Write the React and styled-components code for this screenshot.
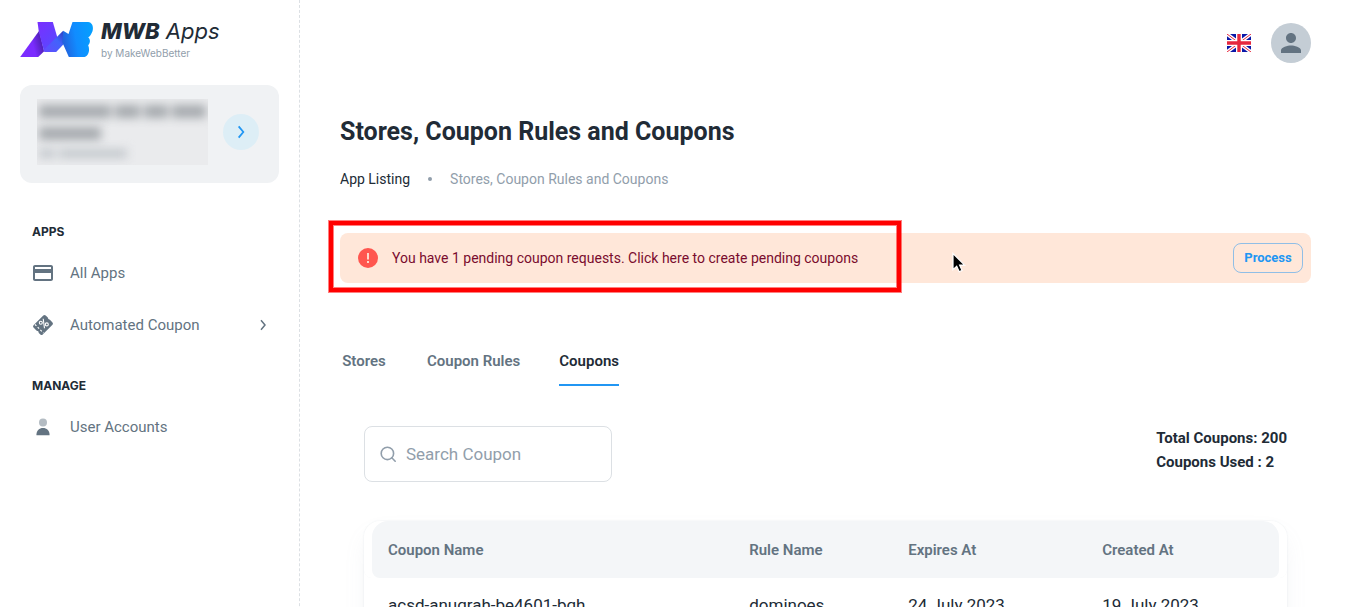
import React, { useState } from "react";
import styled, { createGlobalStyle, ThemeProvider } from "styled-components";
import { MdPayment, MdPerson } from "react-icons/md";

const theme = {
  text: "#212b36",
  muted: "#637381",
  faint: "#919eab",
  blue: "#2196f3",
  surface: "#f4f6f8",
  font: `Roboto, "Liberation Sans", sans-serif`,
  brandFont: `Inter, "Liberation Sans", sans-serif`
};

const GlobalStyle = createGlobalStyle`
  *,
  *::before,
  *::after {
    box-sizing: border-box;
  }

  html {
    scrollbar-width: none;
  }

  body {
    margin: 0;
    background: #fff;
    color: ${theme.text};
    font-family: ${theme.font};
    font-size: 14px;
    line-height: 24px;
  }

  button,
  input {
    font-family: inherit;
  }
`;

const Shell = styled.div`
  display: flex;
  min-height: 100vh;
`;

const Sidebar = styled.aside`
  flex: 0 0 300px;
  padding: 20px 20px 24px;
  border-right: 1px dashed rgba(145, 158, 171, 0.32);
`;

const Brand = styled.a`
  display: flex;
  align-items: flex-start;
  gap: 8px;
  color: inherit;
  font-family: ${({ theme }) => theme.brandFont};
  text-decoration: none;

  svg {
    margin-top: 2px;
  }
`;

const BrandName = styled.span`
  display: block;
  font-size: 22px;
  font-style: italic;
  line-height: 22px;
  white-space: nowrap;

  strong {
    font-weight: 800;
  }
`;

const BrandByline = styled.span`
  display: block;
  color: ${({ theme }) => theme.faint};
  font-size: 10px;
  line-height: 22px;
`;

const StoreCard = styled.div`
  display: flex;
  align-items: center;
  justify-content: space-between;
  height: 98px;
  margin-top: 21px;
  padding: 0 20px 4px 17px;
  border-radius: 12px;
  background: #f0f2f4;
`;

const StoreSummary = styled.div`
  width: 171px;
  height: 66px;
  padding: 6px 2px;
  overflow: hidden;
  background: #eaebed;
`;

const RedactedLine = styled.div`
  display: flex;
  gap: 4px;
  height: ${({ small }) => (small ? "9px" : "13px")};
  margin-bottom: 9px;
  color: ${({ small }) => (small ? "#c3c8cd" : "#a6aaae")};
  filter: blur(5px);
`;

const RedactedWord = styled.span`
  width: ${({ width }) => width}px;
  background: currentColor;
`;

const RoundButton = styled.button`
  display: flex;
  align-items: center;
  justify-content: center;
  width: 36px;
  height: 36px;
  padding: 0;
  border: 0;
  border-radius: 50%;
  background: #ddeef6;
  color: ${({ theme }) => theme.blue};
  cursor: pointer;
`;

const NavSection = styled.nav`
  padding-top: 24px;

  ${StoreCard} + & {
    margin-top: 16px;
  }
`;

const NavHeading = styled.h2`
  margin: 0;
  padding: 0 12px 8px;
  font-family: ${({ theme }) => theme.brandFont};
  font-size: 12px;
  font-weight: 700;
  line-height: 18px;
  text-transform: uppercase;
`;

const NavItem = styled.a`
  display: flex;
  align-items: center;
  height: 48px;
  margin-bottom: 4px;
  padding: 0 10px 0 11px;
  border-radius: 8px;
  color: ${({ theme }) => theme.muted};
  font-size: 15px;
  text-decoration: none;

  &:hover {
    background: ${({ theme }) => theme.surface};
  }
`;

const NavIcon = styled.span`
  display: flex;
  width: 24px;
  height: 24px;
  margin-right: 15px;
`;

const NavLabel = styled.span`
  flex: 1;
`;

const Main = styled.main`
  flex: 1;
  min-width: 0;
  padding: 0 40px;
`;

const TopBar = styled.header`
  display: flex;
  align-items: center;
  justify-content: flex-end;
  gap: 20px;
  height: 86px;
`;

const IconButton = styled.button`
  display: flex;
  padding: 0;
  border: 0;
  background: transparent;
  cursor: pointer;
`;

const Avatar = styled(IconButton)`
  align-items: center;
  justify-content: center;
  width: 40px;
  height: 40px;
  border-radius: 50%;
  background: #c4cdd5;
  color: ${({ theme }) => theme.muted};
`;

const PageTitle = styled.h1`
  margin: 28px 0 19px;
  font-size: 25px;
  font-weight: 700;
  line-height: 36px;
`;

const Breadcrumbs = styled.nav`
  display: flex;
  align-items: center;
  color: ${({ theme }) => theme.faint};
  font-size: 14px;
  line-height: 20px;

  a {
    color: ${({ theme }) => theme.text};
    text-decoration: none;
  }
`;

const Dot = styled.span`
  width: 4px;
  height: 4px;
  margin: 0 18px;
  border-radius: 50%;
  background: ${({ theme }) => theme.faint};
`;

const Alert = styled.div`
  position: relative;
  display: flex;
  align-items: center;
  gap: 14px;
  height: 50px;
  margin-top: 44px;
  padding: 0 8px 0 18px;
  border-radius: 8px;
  background: #ffe7d9;
  color: #7a0c2e;
`;

const AlertText = styled.span`
  flex: 1;
`;

const ProcessButton = styled.button`
  width: 70px;
  height: 30px;
  padding: 0 0 2px;
  border: 1px solid rgba(33, 150, 243, 0.5);
  border-radius: 8px;
  background: transparent;
  color: ${({ theme }) => theme.blue};
  font-size: 13px;
  font-weight: 700;
  cursor: pointer;
`;

const Highlight = styled.div`
  position: absolute;
  top: -12px;
  bottom: -9px;
  left: -11px;
  width: 572px;
  border: 4px solid #f00;
  box-shadow: 0 0 0 1px rgba(255, 0, 0, 0.5),
    inset 0 0 0 1px rgba(255, 0, 0, 0.5);
  pointer-events: none;
`;

const Pointer = styled.svg`
  position: absolute;
  top: 19px;
  left: 611px;
  pointer-events: none;
`;

const Tabs = styled.div`
  display: flex;
  gap: 39px;
  height: 48px;
  margin-top: 55px;
`;

const Tab = styled.button`
  min-width: 48px;
  padding: 0;
  border: 0;
  border-bottom: 2px solid
    ${({ active, theme }) => (active ? theme.blue : "transparent")};
  background: transparent;
  color: ${({ active, theme }) => (active ? theme.text : theme.muted)};
  font-size: 15px;
  font-weight: 600;
  cursor: pointer;
`;

const Panel = styled.section`
  padding: 40px 24px 24px;
`;

const Toolbar = styled.div`
  display: flex;
  align-items: flex-start;
  justify-content: space-between;
  margin-bottom: 39px;
`;

const SearchField = styled.label`
  display: flex;
  align-items: center;
  gap: 8px;
  width: 248px;
  height: 56px;
  padding: 0 13px;
  border: 1px solid rgba(145, 158, 171, 0.32);
  border-radius: 8px;
  color: ${({ theme }) => theme.faint};
`;

const SearchInput = styled.input`
  flex: 1;
  min-width: 0;
  padding: 0;
  border: 0;
  outline: 0;
  background: transparent;
  color: ${({ theme }) => theme.text};
  font-size: 17px;

  &::placeholder {
    color: ${({ theme }) => theme.faint};
    opacity: 1;
  }
`;

const Totals = styled.div`
  font-size: 15px;
  font-weight: 700;
  line-height: 24px;
`;

const TableCard = styled.div`
  border-radius: 16px;
  box-shadow: 0 0 2px rgba(145, 158, 171, 0.2),
    0 12px 24px -4px rgba(145, 158, 171, 0.12);
`;

const Table = styled.table`
  width: 100%;
  border-collapse: separate;
  border-spacing: 0;
  table-layout: fixed;
`;

const Th = styled.th`
  width: ${({ width }) => width};
  height: 57px;
  padding: 16px;
  background: ${({ theme }) => theme.surface};
  color: ${({ theme }) => theme.muted};
  font-size: 15px;
  font-weight: 600;
  line-height: 24px;
  text-align: left;

  &:first-child {
    padding-left: 24px;
    border-radius: 16px 0 0 8px;
    box-shadow: inset 8px 0 0 #fff;
  }

  &:last-child {
    padding-right: 24px;
    border-radius: 0 16px 8px 0;
    box-shadow: inset -8px 0 0 #fff;
  }
`;

const Td = styled.td`
  padding: 15px 16px;
  font-size: 17px;
  line-height: 24px;

  &:first-child {
    padding-left: 24px;
  }
`;

const Logo = () => (
  <svg width="73" height="35" viewBox="60 66 218 105" aria-hidden="true">
    <defs>
      <linearGradient id="leg" x1="0" y1="0.6" x2="1" y2="0.3">
        <stop offset="0.5" stopColor="#7b2cff" />
        <stop offset="1" stopColor="#421c9f" />
      </linearGradient>
      <linearGradient id="stroke" x1="0" y1="0" x2="0.7" y2="1">
        <stop offset="0" stopColor="#7a2fff" />
        <stop offset="1" stopColor="#5848ff" />
      </linearGradient>
      <linearGradient id="valley" x1="0" y1="1" x2="1" y2="0">
        <stop offset="0" stopColor="#654bff" />
        <stop offset="0.6" stopColor="#4163fb" />
        <stop offset="1" stopColor="#293cba" />
      </linearGradient>
      <linearGradient id="bowl" x1="0" y1="0.6" x2="1" y2="0.4">
        <stop offset="0" stopColor="#235fdb" />
        <stop offset="0.45" stopColor="#118cff" />
        <stop offset="1" stopColor="#059fff" />
      </linearGradient>
    </defs>
    <path d="M60 171 117 92l15 62-18 17z" fill="url(#leg)" />
    <path d="M112 66h46l14 48-40 41-16-60z" fill="url(#stroke)" />
    <path d="m189 92-59 59 3 5h35l25-26z" fill="url(#valley)" />
    <path
      d="M217 66h47c14 1 19 20 9 36-2 4-5 8-9 10 7 6 7 16 0 24 6 12 2 35-15 35h-43l-20-45 3-34 16 10z"
      fill="url(#bowl)"
    />
  </svg>
);

const ChevronIcon = ({ size = 12 }) => (
  <svg width={size} height={size} viewBox="0 0 12 12" aria-hidden="true">
    <path
      d="m4 1.2 4 4.8-4 4.8"
      fill="none"
      stroke="currentColor"
      strokeWidth="1.5"
    />
  </svg>
);

const CouponIcon = () => (
  <svg width="24" height="24" viewBox="0 0 24 24" aria-hidden="true">
    <path
      d="M12.3 2.4q1.2-1 2.4 0l2.1 2.1q.1 1.8 2.1 2.2l2.6 2.7q1 1.2 0 2.3l-9.8 9.8q-1.1 1-2.3 0l-1.6-1.6q0-2-2.1-2.1l-3.2-3.2q-1-1.2 0-2.3z"
      fill="currentColor"
    />
    <g fill="none" stroke="#fff" strokeWidth="1.1">
      <circle cx="9.8" cy="9.8" r="1.5" />
      <circle cx="15.8" cy="11.4" r="1.5" />
      <path d="m12.2 5.8 1.3 9.5" />
      <path d="m4 11.5 8.5 8.5" strokeDasharray="2 1.8" />
    </g>
  </svg>
);

const UserIcon = () => (
  <svg
    width="24"
    height="24"
    viewBox="0 0 24 24"
    fill="currentColor"
    aria-hidden="true"
  >
    <circle cx="12" cy="7.5" r="4" opacity="0.48" />
    <path d="M5.500 20.300v-1C5.500 15.500 8.300 13 12 13s6.500 2.500 6.500 6.300v1z" />
  </svg>
);

const AlertIcon = () => (
  <svg width="20" height="20" viewBox="0 0 20 20" aria-hidden="true">
    <circle cx="10" cy="10" r="10" fill="#ff564f" />
    <path d="M10 5v6.5M10 13v2" stroke="#ffe7d9" strokeWidth="1.8" />
  </svg>
);

const FlagIcon = () => (
  <svg width="24" height="18" viewBox="0 0 24 18" aria-hidden="true">
    <path d="M0 0h24v18H0z" fill="#0a17a7" />
    <path d="m0 0 24 18M24 0 0 18" stroke="#fff" strokeWidth="3.6" />
    <path d="m0 0 24 18M24 0 0 18" stroke="#e6273e" strokeWidth="1" />
    <path d="M12 0v18M0 9h24" stroke="#fff" strokeWidth="6" />
    <path d="M12 0v18M0 9h24" stroke="#e6273e" strokeWidth="3.4" />
  </svg>
);

const SearchIcon = () => (
  <svg width="20" height="20" viewBox="0 0 20 20" aria-hidden="true">
    <g fill="none" stroke="currentColor" strokeWidth="1.6">
      <circle cx="9.4" cy="9.4" r="6.2" />
      <path d="m13.8 13.8 3.4 3.4" strokeLinecap="round" />
    </g>
  </svg>
);

const columns = [
  { key: "name", label: "Coupon Name", width: "40%" },
  { key: "rule", label: "Rule Name", width: "159px" },
  { key: "expires", label: "Expires At", width: "194px" },
  { key: "created", label: "Created At", width: "auto" }
];

const coupons = [
  {
    name: "acsd-anugrah-be4601-bgh",
    rule: "dominoes",
    expires: "24 July 2023",
    created: "19 July 2023"
  }
];

const tabs = ["Stores", "Coupon Rules", "Coupons"];

const SideNavigation = () => (
  <Sidebar>
    <Brand href="#">
      <Logo />
      <span>
        <BrandName>
          <strong>MWB</strong> Apps
        </BrandName>
        <BrandByline>by MakeWebBetter</BrandByline>
      </span>
    </Brand>
    <StoreCard>
      <StoreSummary>
        <RedactedLine>
          <RedactedWord width={72} />
          <RedactedWord width={26} />
          <RedactedWord width={24} />
          <RedactedWord width={34} />
        </RedactedLine>
        <RedactedLine>
          <RedactedWord width={62} />
        </RedactedLine>
        <RedactedLine small>
          <RedactedWord width={16} />
          <RedactedWord width={68} />
        </RedactedLine>
      </StoreSummary>
      <RoundButton aria-label="Switch store">
        <ChevronIcon size={14} />
      </RoundButton>
    </StoreCard>
    <NavSection>
      <NavHeading>Apps</NavHeading>
      <NavItem href="#">
        <NavIcon>
          <MdPayment size={24} />
        </NavIcon>
        <NavLabel>All Apps</NavLabel>
      </NavItem>
      <NavItem href="#">
        <NavIcon>
          <CouponIcon />
        </NavIcon>
        <NavLabel>Automated Coupon</NavLabel>
        <ChevronIcon />
      </NavItem>
    </NavSection>
    <NavSection>
      <NavHeading>Manage</NavHeading>
      <NavItem href="#">
        <NavIcon>
          <UserIcon />
        </NavIcon>
        <NavLabel>User Accounts</NavLabel>
      </NavItem>
    </NavSection>
  </Sidebar>
);

const PendingAlert = () => (
  <Alert role="alert">
    <AlertIcon />
    <AlertText>
      You have 1 pending coupon requests. Click here to create pending coupons
    </AlertText>
    <ProcessButton>Process</ProcessButton>
    <Highlight />
    <Pointer width="16" height="22" viewBox="0 0 16 22">
      <path
        d="M2 1.5v16.2l3.7-3.5 2.5 5.5 2.9-1.3-2.5-5.3h5z"
        fill="#000"
        stroke="#fff"
        strokeWidth="1.2"
      />
    </Pointer>
  </Alert>
);

const CouponTable = ({ rows }) => (
  <TableCard>
    <Table>
      <thead>
        <tr>
          {columns.map(({ key, label, width }) => (
            <Th key={key} width={width}>
              {label}
            </Th>
          ))}
        </tr>
      </thead>
      <tbody>
        {rows.map(row => (
          <tr key={row.name}>
            {columns.map(({ key }) => (
              <Td key={key}>{row[key]}</Td>
            ))}
          </tr>
        ))}
      </tbody>
    </Table>
  </TableCard>
);

const App = () => {
  const [activeTab, setActiveTab] = useState("Coupons");

  return (
    <ThemeProvider theme={theme}>
      <GlobalStyle />
      <Shell>
        <SideNavigation />
        <Main>
          <TopBar>
            <IconButton aria-label="Language">
              <FlagIcon />
            </IconButton>
            <Avatar aria-label="Account">
              <MdPerson size={30} />
            </Avatar>
          </TopBar>
          <PageTitle>Stores, Coupon Rules and Coupons</PageTitle>
          <Breadcrumbs>
            <a href="#">App Listing</a>
            <Dot />
            <span>Stores, Coupon Rules and Coupons</span>
          </Breadcrumbs>
          <PendingAlert />
          <Tabs role="tablist">
            {tabs.map(tab => (
              <Tab
                key={tab}
                role="tab"
                aria-selected={tab === activeTab}
                active={tab === activeTab ? 1 : 0}
                onClick={() => setActiveTab(tab)}
              >
                {tab}
              </Tab>
            ))}
          </Tabs>
          <Panel>
            <Toolbar>
              <SearchField>
                <SearchIcon />
                <SearchInput
                  aria-label="Search Coupon"
                  placeholder="Search Coupon"
                />
              </SearchField>
              <Totals>
                <div>Total Coupons: 200</div>
                <div>Coupons Used : 2</div>
              </Totals>
            </Toolbar>
            <CouponTable rows={coupons} />
          </Panel>
        </Main>
      </Shell>
    </ThemeProvider>
  );
};

export default App;
